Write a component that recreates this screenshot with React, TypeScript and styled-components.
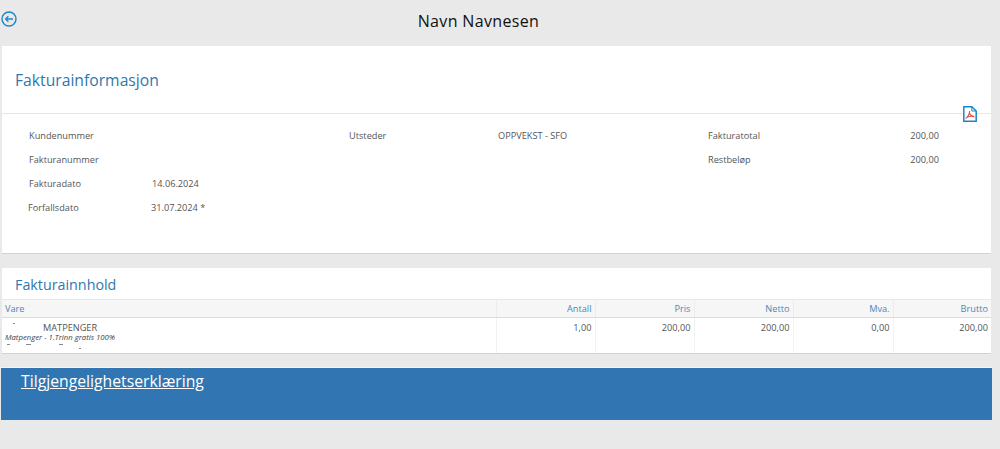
import React, { FC } from 'react';
import styled, { createGlobalStyle } from 'styled-components';

const GlobalStyle = createGlobalStyle`
  html, body {
    margin: 0;
    padding: 0;
    background: #e9e9e9;
    font-family: 'Open Sans', 'Liberation Sans', sans-serif;
    color: #444;
  }
`;

const Page = styled.div`
  width: 1000px;
  height: 449px;
  overflow: hidden;
  display: flex;
  flex-direction: column;
`;

const TopBar = styled.header`
  height: 46px;
  flex: none;
  position: relative;
  display: flex;
  justify-content: center;
  padding-top: 10px;
  box-sizing: border-box;
  padding-right: 43px;
`;

const BackButton = styled.a`
  position: absolute;
  left: 1px;
  top: 10px;
  width: 16px;
  height: 16px;
  color: #1b87c9;
`;

const Name = styled.h1`
  margin: 0;
  font-size: 16px;
  line-height: 22px;
  font-weight: 400;
  color: #111;
  letter-spacing: 0.35px;
`;

const Panel = styled.section`
  margin: 0 9px 0 2px;
  background: #fff;
  border-bottom: 1px solid #d2d2d2;
`;

const InfoPanel = styled(Panel)`
  height: 208px;
  box-sizing: border-box;
  position: relative;
`;

const PanelHeader = styled.div`
  height: 67px;
  border-bottom: 1px solid #e6e6e6;
  box-sizing: content-box;
  padding-left: 13px;
  display: flex;
  align-items: center;
`;

const PanelTitle = styled.h2`
  margin: 0;
  font-size: 15.7px;
  font-weight: 400;
  color: #2f78ae;
  line-height: 22px;
`;

const PdfLink = styled.a`
  position: absolute;
  right: 14px;
  top: 59px;
  width: 14px;
  height: 16px;
`;

const InfoGrid = styled.div`
  display: grid;
  grid-template-columns: 320px 359px 231px;
  padding: 9px 0 0 27px;
`;

const InfoColumn = styled.div`
  display: flex;
  flex-direction: column;
`;

const InfoRow = styled.div<{ $labelWidth: number; $right?: boolean; $nudge?: boolean }>`
  height: 24px;
  display: grid;
  grid-template-columns: ${({ $labelWidth, $right }) => ($right ? `1fr auto` : `${$labelWidth}px 1fr`)};
  align-items: center;
  font-size: 9.2px;
  color: #555;
  margin-left: ${({ $nudge }) => ($nudge ? '-1px' : '0')};
`;

const Spacer = styled.div`
  height: 14px;
`;

const ContentPanel = styled(Panel)`
  margin-top: 14px;
  height: 86px;
  box-sizing: border-box;
`;

const ContentTitle = styled(PanelTitle)`
  font-size: 14.3px;
  line-height: 33px;
  height: 31px;
  padding-left: 13px;
`;

const LineTable = styled.table`
  width: 100%;
  border-collapse: collapse;
  table-layout: fixed;
  font-size: 9.2px;
`;

const HeadCell = styled.th<{ $left?: boolean; $width?: number }>`
  height: 18px;
  padding: 0 3px;
  box-sizing: border-box;
  font-weight: 400;
  color: #4a88b8;
  text-align: ${({ $left }) => ($left ? 'left' : 'right')};
  background: #f6f6f6;
  border-top: 1px solid #e8e8e8;
  border-bottom: 1px solid #dcdcdc;
  border-right: 1px solid #ececec;
  width: ${({ $width }) => ($width ? `${$width}px` : 'auto')};
  &:last-child {
    border-right: none;
  }
`;

const BodyCell = styled.td`
  height: 35px;
  padding: 3px 3px 0;
  vertical-align: top;
  text-align: right;
  color: #555;
  line-height: 14px;
  border-right: 1px solid #f2f2f2;
  box-sizing: border-box;
  &:last-child {
    border-right: none;
  }
`;

const ItemCell = styled(BodyCell)`
  text-align: left;
  position: relative;
`;

const ItemName = styled.div`
  padding-left: 38px;
  line-height: 11px;
  margin-top: 1px;
`;

const ItemNote = styled.div`
  font-size: 7.75px;
  font-style: italic;
  line-height: 10px;
  margin-top: -1px;
  color: #444;
`;

const Speck = styled.i<{ $x: number; $y: number; $w: number }>`
  position: absolute;
  left: ${({ $x }) => $x}px;
  top: ${({ $y }) => $y}px;
  width: ${({ $w }) => $w}px;
  height: 1px;
  background: #8a8a8a;
`;

const Footer = styled.footer`
  margin: 14px 8px 0 1px;
  height: 52px;
  background: #3176b2;
  box-shadow: 0 -1px 0 #f3f6f8;
  padding: 2px 0 0 20px;
  box-sizing: border-box;
`;

const FooterLink = styled.a`
  color: #fff;
  font-size: 15.75px;
  line-height: 22px;
  text-decoration: underline;
`;

const BackIcon: FC = () => (
  <svg width="16" height="16" viewBox="0 0 16 16" fill="none" stroke="currentColor">
    <circle cx="8" cy="8" r="7" strokeWidth="1.4" />
    <path d="M12 8H4.6M7.4 5.2 4.6 8l2.8 2.8" strokeWidth="1.3" />
  </svg>
);

const PdfIcon: FC = () => (
  <svg width="14" height="16" viewBox="0 0 14 16" fill="none">
    <path d="M.8.8h8L13.2 5v10.2H.8z" stroke="#1b87c9" strokeWidth="1.5" fill="#fff" />
    <path d="M8.8.8V5h4.4" stroke="#1b87c9" strokeWidth="1" />
    <path d="M6.6 5c0 2.6-1.6 5.6-4 7.6M6.6 7.5c.8 1.8 2.6 3 5 3.2M4 11.2c2.2-1 4.6-1.2 7-.6" stroke="#e2504c" strokeWidth="1.1" />
  </svg>
);

const columns = [
  { title: 'Antall', value: '1,00', width: 99 },
  { title: 'Pris', value: '200,00', width: 99 },
  { title: 'Netto', value: '200,00', width: 99 },
  { title: 'Mva.', value: '0,00', width: 100 },
  { title: 'Brutto', value: '200,00', width: 98 },
];

const App: FC = () => {
  return (
    <Page>
      <GlobalStyle />
      <TopBar>
        <BackButton aria-label="Tilbake">
          <BackIcon />
        </BackButton>
        <Name>Navn Navnesen</Name>
      </TopBar>

      <InfoPanel>
        <PanelHeader>
          <PanelTitle>Fakturainformasjon</PanelTitle>
        </PanelHeader>
        <PdfLink aria-label="PDF">
          <PdfIcon />
        </PdfLink>
        <InfoGrid>
          <InfoColumn>
            <InfoRow $labelWidth={123}>
              <span>Kundenummer</span>
              <span />
            </InfoRow>
            <InfoRow $labelWidth={123}>
              <span>Fakturanummer</span>
              <span />
            </InfoRow>
            <InfoRow $labelWidth={123}>
              <span>Fakturadato</span>
              <span>14.06.2024</span>
            </InfoRow>
            <InfoRow $labelWidth={123} $nudge>
              <span>Forfallsdato</span>
              <span>31.07.2024 *</span>
            </InfoRow>
            <Spacer />
          </InfoColumn>
          <InfoColumn>
            <InfoRow $labelWidth={149}>
              <span>Utsteder</span>
              <span>OPPVEKST - SFO</span>
            </InfoRow>
          </InfoColumn>
          <InfoColumn>
            <InfoRow $labelWidth={0} $right>
              <span>Fakturatotal</span>
              <span>200,00</span>
            </InfoRow>
            <InfoRow $labelWidth={0} $right>
              <span>Restbeløp</span>
              <span>200,00</span>
            </InfoRow>
          </InfoColumn>
        </InfoGrid>
      </InfoPanel>

      <ContentPanel>
        <ContentTitle>Fakturainnhold</ContentTitle>
        <LineTable>
          <thead>
            <tr>
              <HeadCell $left>Vare</HeadCell>
              {columns.map((c) => (
                <HeadCell key={c.title} $width={c.width}>
                  {c.title}
                </HeadCell>
              ))}
            </tr>
          </thead>
          <tbody>
            <tr>
              <ItemCell>
                <Speck $x={11} $y={5} $w={2} />
                <ItemName>MATPENGER</ItemName>
                <ItemNote>Matpenger - 1.Trinn gratis 100%</ItemNote>
                <Speck $x={5} $y={26} $w={3} />
                <Speck $x={24} $y={26} $w={5} />
                <Speck $x={57} $y={26} $w={4} />
                <Speck $x={77} $y={30} $w={2} />
              </ItemCell>
              {columns.map((c) => (
                <BodyCell key={c.title}>{c.value}</BodyCell>
              ))}
            </tr>
          </tbody>
        </LineTable>
      </ContentPanel>

      <Footer>
        <FooterLink href="#">Tilgjengelighetserklæring</FooterLink>
      </Footer>
    </Page>
  );
};

export default App;
